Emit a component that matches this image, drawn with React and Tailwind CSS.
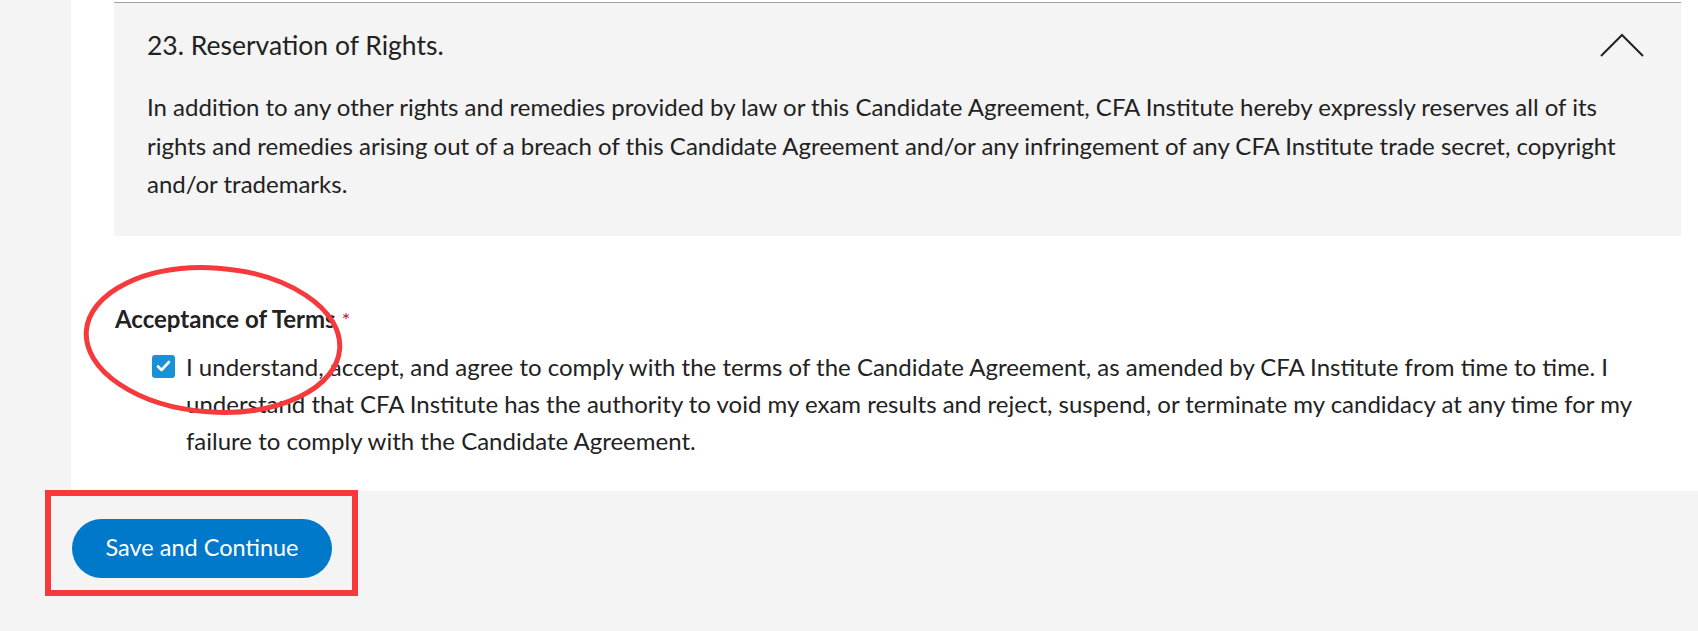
import React from 'react';

const App = () => {
  return (
    <div className="relative h-[631px] w-full overflow-hidden bg-[#f4f4f4] text-[#222222]" style={{ fontFamily: 'Lato, "Open Sans", sans-serif' }}>
      {/* Agreement panel */}
      <div className="ml-[71px] bg-white pl-[43px] pr-[17px] pt-[2px] pb-[32px]">
        <div className="border-t border-[#a3a3a3] bg-[#f4f4f4] pl-[33px] pr-[36px] pt-[27px] pb-[32px]">
          <div className="flex h-[30px] items-center justify-between">
            <h3 className="text-[26.5px] leading-[30px]">23. Reservation of Rights.</h3>
            <svg width="46" height="26" viewBox="0 0 46 26" fill="none" stroke="#222" strokeWidth="2">
              <polyline points="2,24 23,3 44,24" />
            </svg>
          </div>
          <p className="mt-[28px] pr-[12px] text-[24px] leading-[38.5px]">
            In addition to any other rights and remedies provided by law or this Candidate Agreement, CFA Institute hereby expressly reserves all of its rights and remedies arising out of a breach of this Candidate Agreement and/or any infringement of any CFA Institute trade secret, copyright and/or trademarks.
          </p>
        </div>

        <div className="mt-[69px] pl-px">
          <div className="text-[24px] font-bold leading-[28px]">
            Acceptance of Terms<span className="ml-1.5 align-top text-[20px] font-normal text-[#b8123e]">*</span>
          </div>
          <label className="mt-[15px] flex pl-[37px]">
            <span className="mt-[7px] flex h-[23px] w-[23px] shrink-0 items-center justify-center rounded-[3px] bg-[#1991d6]">
              <svg width="15" height="12" viewBox="0 0 15 12" fill="none" stroke="white" strokeWidth="2.6" strokeLinecap="round" strokeLinejoin="round">
                <polyline points="2,6.5 5.5,10 13,2" />
              </svg>
            </span>
            <span className="ml-[11px] text-[24px] leading-[37px]">
              I understand, accept, and agree to comply with the terms of the Candidate Agreement, as amended by CFA Institute from time to time. I understand that CFA Institute has the authority to void my exam results and reject, suspend, or terminate my candidacy at any time for my failure to comply with the Candidate Agreement.
            </span>
          </label>
        </div>
      </div>

      <button className="ml-[72px] mt-[28px] flex h-[59px] w-[260px] items-center justify-center rounded-full bg-[#0079cb] text-[23.5px] text-white">
        Save and Continue
      </button>

      {/* red annotation marks */}
      <svg className="pointer-events-none absolute left-0 top-0" width="1698" height="631" fill="none" stroke="#f43a3c">
        <ellipse cx="213" cy="340" rx="127" ry="72" strokeWidth="5" transform="rotate(4 213 340)" />
        <rect x="48" y="493" width="307" height="100" strokeWidth="6" />
      </svg>
    </div>
  );
};

export default App;
